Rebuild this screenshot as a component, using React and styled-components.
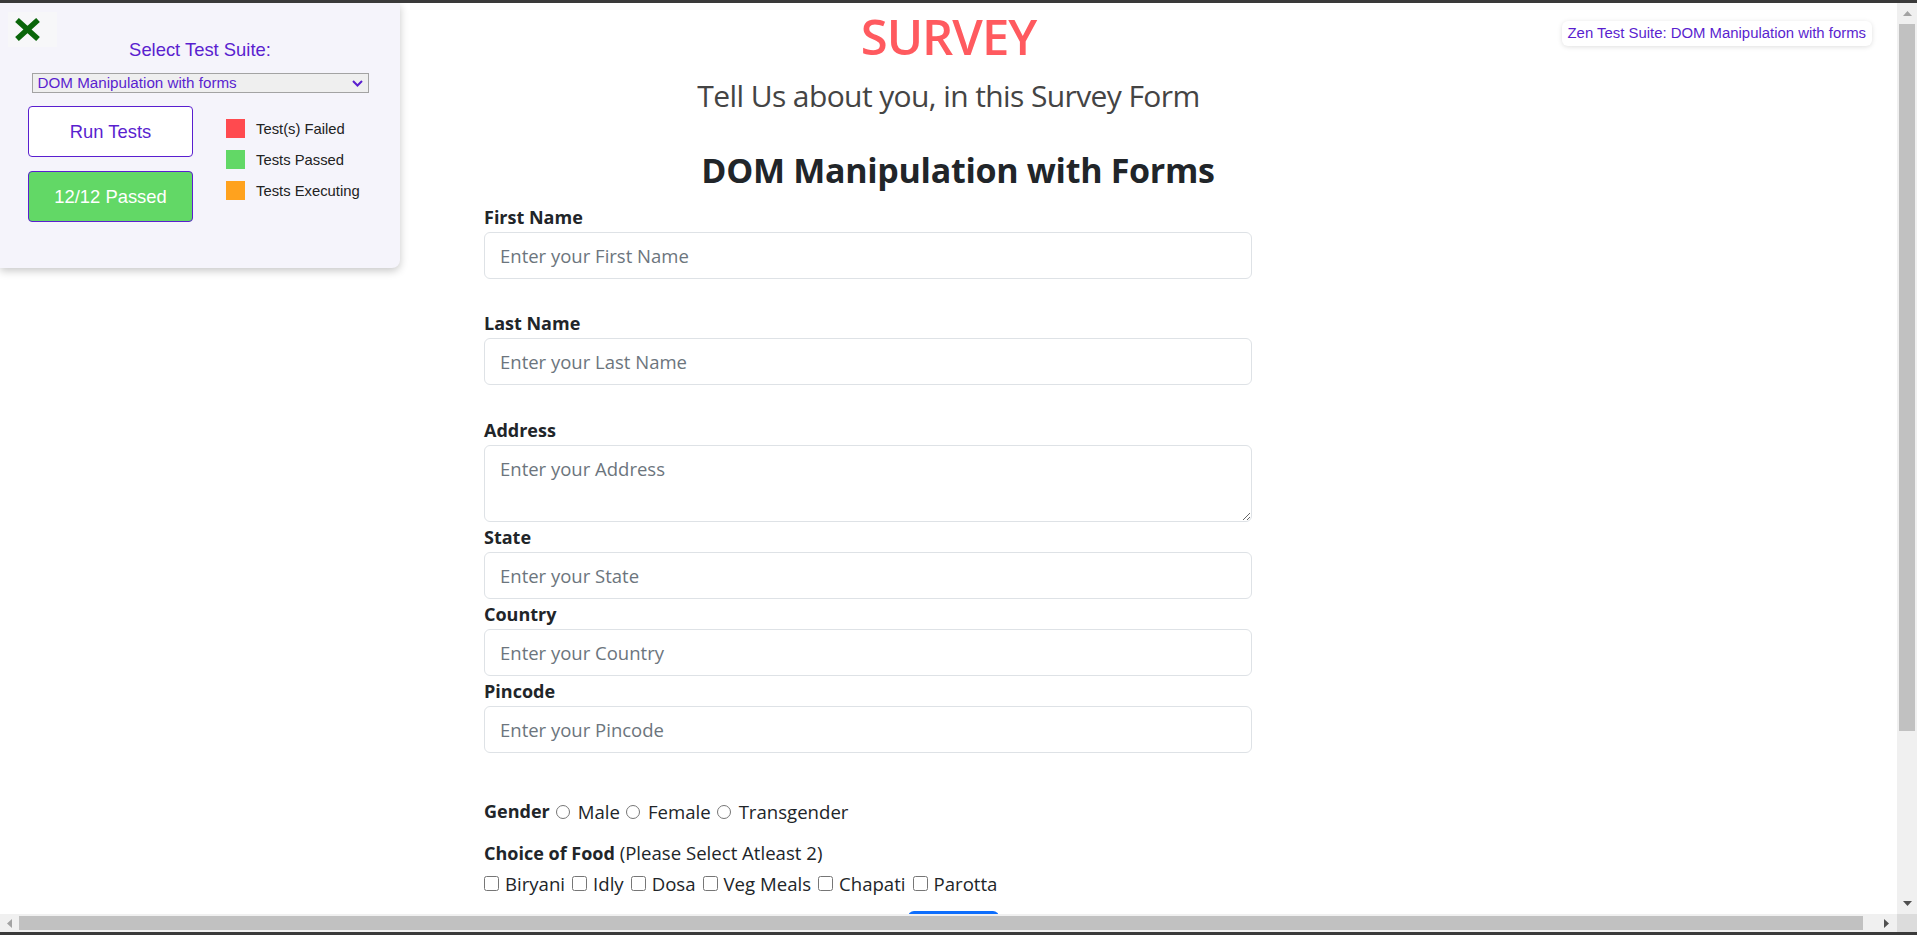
import React from 'react'
import styled, { createGlobalStyle } from 'styled-components'

const GlobalStyle = createGlobalStyle`
  html, body { margin: 0; padding: 0; overflow: hidden; }
  *, *::before, *::after { box-sizing: border-box; }
`

const PURPLE = '#5a1fcf'

/* window frame + fake classic scrollbars */
const Screen = styled.div`
  height: 100vh;
  display: flex;
  flex-direction: column;
  border-top: 3px solid #3a3a3a;
  border-bottom: 3px solid #3a3a3a;
  background: #fff;
`
const Viewport = styled.div`
  flex: 1;
  min-height: 0;
  display: flex;
`
const Page = styled.div`
  flex: 1;
  position: relative;
  overflow: hidden;
  font-family: "Open Sans", sans-serif;
  color: #212529;
`
const VScrollbar = styled.div`
  width: 20px;
  background: #f0f0f0;
  display: flex;
  flex-direction: column;
  align-items: center;
`
const ArrowCell = styled.div`
  width: ${(p) => p.w || 20}px;
  height: ${(p) => p.h || 21}px;
  flex-shrink: 0;
  display: flex;
  align-items: center;
  justify-content: center;
`
const VThumb = styled.div`
  width: 16px;
  height: 707px;
  background: #c1c1c1;
`
const Spacer = styled.div`
  flex: 1;
`
const HScrollRow = styled.div`
  height: 18px;
  display: flex;
  background: #f0f0f0;
`
const HThumb = styled.div`
  width: 1844px;
  height: 14px;
  margin-top: 2px;
  background: #c1c1c1;
`
const Corner = styled.div`
  width: 20px;
  background: #dcdcdc;
`

const Arrow = ({ dir, color }) => {
  const pts = {
    up: '0,5 4.5,0 9,5',
    down: '0,0 9,0 4.5,5',
    left: '5,0 5,9 0,4.5',
    right: '0,0 0,9 5,4.5',
  }[dir]
  const vertical = dir === 'up' || dir === 'down'
  return (
    <svg width={vertical ? 9 : 5} height={vertical ? 5 : 9}>
      <polygon points={pts} fill={color} />
    </svg>
  )
}

/* test suite widget */
const SuitePanel = styled.aside`
  position: absolute;
  top: 0;
  left: 0;
  z-index: 2;
  width: 400px;
  height: 265px;
  padding-top: 36px;
  background: #f5f4fb;
  border-bottom-right-radius: 8px;
  box-shadow: 0 3px 8px rgba(0, 0, 0, 0.22);
  font-family: "Liberation Sans", Arial, sans-serif;
  display: flex;
  flex-direction: column;
  align-items: center;
`
const CloseButton = styled.button`
  position: absolute;
  top: 9px;
  left: 8px;
  width: 49px;
  height: 35px;
  padding: 0 0 0 7px;
  border: none;
  background: #f7f7f9;
  display: flex;
  align-items: center;
`
const SuiteTitle = styled.div`
  font-size: 18.4px;
  line-height: 22px;
  color: ${PURPLE};
`
const SelectWrap = styled.div`
  position: relative;
  margin-top: 12px;
  width: 337px;
  height: 20px;
`
const SuiteSelect = styled.select`
  appearance: none;
  width: 100%;
  height: 100%;
  padding: 0 5px;
  border: 1px solid #a3a3a3;
  border-radius: 0;
  background: #efefef;
  color: ${PURPLE};
  font-family: inherit;
  font-size: 15.2px;
  line-height: 18px;
`
const Chevron = styled.svg`
  position: absolute;
  right: 6px;
  top: 7px;
  pointer-events: none;
`
const ControlRow = styled.div`
  align-self: stretch;
  display: flex;
  margin-top: 13px;
  padding-left: 28px;
`
const ButtonColumn = styled.div`
  width: 165px;
  display: flex;
  flex-direction: column;
  gap: 14px;
`
const SuiteButton = styled.button`
  height: 51px;
  border: 1px solid ${PURPLE};
  border-radius: 4px;
  background: ${(p) => p.bg};
  color: ${(p) => p.fg};
  font-family: inherit;
  font-size: 18.4px;
`
const Legend = styled.div`
  margin-left: 33px;
  padding-top: 13px;
  display: flex;
  flex-direction: column;
  gap: 12px;
`
const LegendItem = styled.div`
  display: flex;
  align-items: center;
  gap: 11px;
  font-size: 14.8px;
  color: #222;
`
const Swatch = styled.span`
  width: 19px;
  height: 19px;
  background: ${(p) => p.color};
`
const SuiteBadge = styled.div`
  position: absolute;
  top: 18px;
  right: 25px;
  height: 25px;
  padding: 0 6px;
  border-radius: 6px;
  background: #fff;
  box-shadow: 0 1px 5px rgba(0, 0, 0, 0.13);
  font-family: "Liberation Sans", Arial, sans-serif;
  font-size: 14.9px;
  line-height: 25px;
  color: ${PURPLE};
`

/* survey page */
const Header = styled.header`
  text-align: center;
`
const SurveyTitle = styled.h1`
  margin: 0;
  font-size: 49px;
  line-height: 66px;
  font-weight: 600;
  letter-spacing: -1px;
  color: #ff5a5f;
`
const Subtitle = styled.p`
  margin: 5px 0 0;
  font-size: 30px;
  line-height: 44px;
  font-weight: 400;
  letter-spacing: -0.6px;
  color: #444;
`
const FormColumn = styled.form`
  margin-left: 484px;
  width: 948px;
`
const FormHeading = styled.h2`
  margin: 32px 0 12px;
  text-align: center;
  font-size: 34px;
  line-height: 40px;
  font-weight: 700;
  letter-spacing: -0.3px;
`
const Field = styled.div`
  width: 768px;
  margin-bottom: ${(p) => p.gap || 0}px;
`
const Label = styled.label`
  display: block;
  font-size: 18px;
  line-height: 30px;
  font-weight: 700;
`
const TextInput = styled.input`
  display: block;
  width: 100%;
  height: 47px;
  padding: 0 15px;
  border: 1px solid #dee2e6;
  border-radius: 6px;
  font-family: inherit;
  font-size: 18.5px;
  color: #212529;
  &::placeholder {
    color: #6c757d;
  }
`
const TextArea = styled.textarea`
  display: block;
  width: 100%;
  height: 77px;
  padding: 9px 15px;
  border: 1px solid #dee2e6;
  border-radius: 6px;
  font-family: inherit;
  font-size: 18.5px;
  line-height: 28px;
  resize: vertical;
  &::placeholder {
    color: #6c757d;
  }
`
const OptionRow = styled.div`
  display: flex;
  align-items: center;
  gap: ${(p) => p.gap || 6}px;
  margin-top: ${(p) => p.top || 0}px;
  font-size: 18.6px;
  line-height: 29px;
`
const Strong = styled.span`
  font-weight: 700;
  font-size: 18px;
`
const Option = styled.label`
  display: flex;
  align-items: center;
  gap: ${(p) => (p.round ? 8 : 6)}px;
`
const Choice = styled.input`
  width: ${(p) => (p.type === 'radio' ? 14 : 15)}px;
  height: ${(p) => (p.type === 'radio' ? 14 : 15)}px;
  margin: 0;
`
const SubmitButton = styled.button`
  display: block;
  margin: 13px 0 0 424px;
  width: 91px;
  height: 46px;
  border: none;
  border-radius: 6px;
  background: #0d6efd;
  color: #fff;
  font-family: inherit;
  font-size: 18.5px;
`

const fields = [
  { label: 'First Name', placeholder: 'Enter your First Name', gap: 29 },
  { label: 'Last Name', placeholder: 'Enter your Last Name', gap: 30 },
  { label: 'Address', placeholder: 'Enter your Address', area: true },
  { label: 'State', placeholder: 'Enter your State' },
  { label: 'Country', placeholder: 'Enter your Country' },
  { label: 'Pincode', placeholder: 'Enter your Pincode' },
]
const genders = ['Male', 'Female', 'Transgender']
const foods = ['Biryani', 'Idly', 'Dosa', 'Veg Meals', 'Chapati', 'Parotta']
const legend = [
  { color: '#ff4a4f', text: 'Test(s) Failed' },
  { color: '#62d866', text: 'Tests Passed' },
  { color: '#ffa21e', text: 'Tests Executing' },
]

const TestSuite = () => (
  <SuitePanel>
    <CloseButton type="button" aria-label="close">
      <svg width="25" height="23" viewBox="0 0 25 23">
        <path d="M2 2 L23 21 M23 2 L2 21" stroke="#0a660a" strokeWidth="5.5" />
      </svg>
    </CloseButton>
    <SuiteTitle>Select Test Suite:</SuiteTitle>
    <SelectWrap>
      <SuiteSelect defaultValue="dom">
        <option value="dom">DOM Manipulation with forms</option>
      </SuiteSelect>
      <Chevron width="11" height="7" viewBox="0 0 11 7">
        <path d="M1 1 L5.5 5.5 L10 1" stroke={PURPLE} strokeWidth="2" fill="none" />
      </Chevron>
    </SelectWrap>
    <ControlRow>
      <ButtonColumn>
        <SuiteButton bg="#fff" fg={PURPLE}>Run Tests</SuiteButton>
        <SuiteButton bg="#62d866" fg="#fff">12/12 Passed</SuiteButton>
      </ButtonColumn>
      <Legend>
        {legend.map((l) => (
          <LegendItem key={l.text}>
            <Swatch color={l.color} />
            {l.text}
          </LegendItem>
        ))}
      </Legend>
    </ControlRow>
  </SuitePanel>
)

const App = () => {
  return (
    <Screen>
      <GlobalStyle />
      <Viewport>
        <Page>
          <TestSuite />
          <SuiteBadge>Zen Test Suite: DOM Manipulation with forms</SuiteBadge>
          <Header>
            <SurveyTitle>SURVEY</SurveyTitle>
            <Subtitle>Tell Us about you, in this Survey Form</Subtitle>
          </Header>
          <FormColumn onSubmit={(e) => e.preventDefault()}>
            <FormHeading>DOM Manipulation with Forms</FormHeading>
            {fields.map((f) => (
              <Field key={f.label} gap={f.gap}>
                <Label>{f.label}</Label>
                {f.area ? (
                  <TextArea placeholder={f.placeholder} />
                ) : (
                  <TextInput placeholder={f.placeholder} />
                )}
              </Field>
            ))}
            <OptionRow top={44}>
              <Strong>Gender</Strong>
              {genders.map((g) => (
                <Option key={g} round>
                  <Choice type="radio" name="gender" />
                  {g}
                </Option>
              ))}
            </OptionRow>
            <OptionRow top={12}>
              <span>
                <Strong>Choice of Food</Strong> (Please Select Atleast 2)
              </span>
            </OptionRow>
            <OptionRow top={1} gap={7}>
              {foods.map((f) => (
                <Option key={f}>
                  <Choice type="checkbox" />
                  {f}
                </Option>
              ))}
            </OptionRow>
            <SubmitButton type="submit">Submit</SubmitButton>
          </FormColumn>
        </Page>
        <VScrollbar>
          <ArrowCell>
            <Arrow dir="up" color="#a3a3a3" />
          </ArrowCell>
          <VThumb />
          <Spacer />
          <ArrowCell>
            <Arrow dir="down" color="#505050" />
          </ArrowCell>
        </VScrollbar>
      </Viewport>
      <HScrollRow>
        <ArrowCell w={19} h={18}>
          <Arrow dir="left" color="#a3a3a3" />
        </ArrowCell>
        <HThumb />
        <Spacer />
        <ArrowCell w={21} h={18}>
          <Arrow dir="right" color="#505050" />
        </ArrowCell>
        <Corner />
      </HScrollRow>
    </Screen>
  )
}

export default App
